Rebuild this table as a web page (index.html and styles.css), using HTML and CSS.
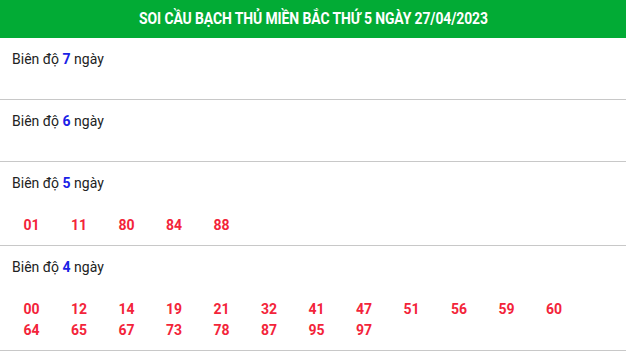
FILE: index.html
```html
<!DOCTYPE html>
<html lang="vi">
<head>
<meta charset="utf-8">
<link rel="stylesheet" href="styles.css">
</head>
<body>
<div class="box">
  <h2 class="head"><span class="head-txt">SOI CẦU BẠCH THỦ MIỀN BẮC THỨ 5 NGÀY 27/04/2023</span></h2>
  <div class="sec">
    <div class="ttl">Biên độ <b>7</b> ngày</div>
    <div class="nums"></div>
  </div>
  <div class="sec">
    <div class="ttl">Biên độ <b>6</b> ngày</div>
    <div class="nums"></div>
  </div>
  <div class="sec">
    <div class="ttl">Biên độ <b>5</b> ngày</div>
    <div class="nums"><span>01</span><span>11</span><span>80</span><span>84</span><span>88</span></div>
  </div>
  <div class="sec">
    <div class="ttl">Biên độ <b>4</b> ngày</div>
    <div class="nums"><span>00</span><span>12</span><span>14</span><span>19</span><span>21</span><span>32</span><span>41</span><span>47</span><span>51</span><span>56</span><span>59</span><span>60</span><span>64</span><span>65</span><span>67</span><span>73</span><span>78</span><span>87</span><span>95</span><span>97</span></div>
  </div>
</div>
</body>
</html>
```
FILE: styles.css
```css
* { box-sizing: border-box; }
html, body { margin: 0; padding: 0; background: #fff; }
body { font-family: Roboto, "Liberation Sans", sans-serif; color: #222; }
.box { width: 626px; }
.head {
  margin: 0;
  height: 38px;
  line-height: 38px;
  background: #02ab35;
  color: #fff;
  font-size: 16px;
  font-weight: 700;
  text-align: center;
}
.head-txt {
  display: inline-block;
  transform: scaleX(0.87);
  white-space: nowrap;
  letter-spacing: -0.1px;
}
.sec {
  border-bottom: 1px solid #c8c8c8;
  padding: 11px 12px 8px;
}
.ttl {
  font-size: 14px;
  line-height: 20px;
}
.ttl b { color: #1a22e6; font-weight: 700; }
.nums {
  display: grid;
  grid-template-columns: repeat(12, 47.5px);
  padding-left: 11.5px;
  margin-top: 22px;
}
.nums:not(:empty) { margin-bottom: 1px; }
.nums span {
  font-size: 14px;
  font-weight: 700;
  line-height: 21px;
  color: #f3243a;
}
```
